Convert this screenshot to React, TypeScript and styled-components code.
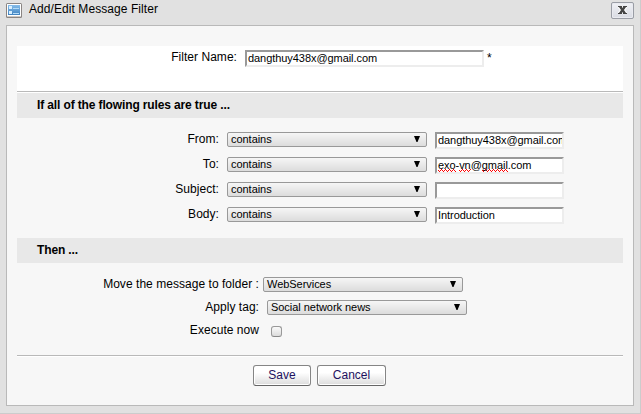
import React from 'react';
import styled, { createGlobalStyle } from 'styled-components';

const GlobalStyle = createGlobalStyle`
  *, *::before, *::after { box-sizing: border-box; }
  body {
    margin: 0;
    background: #e1e1e1;
    font: 12px/15px "Liberation Sans", Arial, sans-serif;
    color: #000;
  }
`;

const Dialog = styled.div`
  width: 641px;
  height: 414px;
  padding: 0 6px;
  background: #e1e1e1;
  border-right: 1px solid #ccc;
  border-bottom: 1px solid #ccc;
  overflow: hidden;
`;

const TitleBar = styled.header`
  display: flex;
  align-items: flex-start;
  height: 25px;
  svg { display: block; flex: none; }
`;

const Title = styled.h1`
  flex: 1;
  margin: 2px 0 0 7px;
  font-size: 12px;
  font-weight: normal;
  line-height: 15px;
  letter-spacing: 0.07px;
`;

const CloseButton = styled.button`
  display: flex;
  align-items: center;
  justify-content: center;
  width: 23px;
  height: 17px;
  margin: 2px 0 0;
  padding: 0 0 1px;
  border: 1px solid #9a9da5;
  border-radius: 2px;
  background: linear-gradient(#f0f1f5, #d9dbe3);
  box-shadow: inset 0 0 0 1px #e9eaf0;
`;

const Panel = styled.main`
  width: 628px;
  height: 381px;
  padding: 20px 10px 0;
  border: 1px solid #b9b9b9;
  background: #f7f7f7;
`;

const NameBlock = styled.div`
  display: flex;
  align-items: flex-start;
  height: 45px;
  padding-top: 4px;
  background: #fff;
`;

const Rule = styled.div`
  height: 2px;
  border-top: 1px solid #b9b9b9;
  background: #fff;
`;

const SectionTitle = styled.h2`
  height: 25px;
  margin: 0;
  padding-left: 20px;
  background: #e8e8e8;
  font-size: 12px;
  font-weight: bold;
  line-height: 24px;
  letter-spacing: -0.13px;
`;

const Label = styled.label<{ $width: number; $gap: number }>`
  width: ${(p) => p.$width}px;
  margin-right: ${(p) => p.$gap}px;
  text-align: right;
  white-space: nowrap;
  letter-spacing: 0.04px;
`;

const Field = styled.div<{ $width: number }>`
  width: ${(p) => p.$width}px;
  height: 17px;
  padding-left: 1px;
  border: 2px solid;
  border-color: #999 #ededed #ededed #999;
  background: #fff;
  font-size: 11px;
  line-height: 13px;
  letter-spacing: -0.06px;
  white-space: nowrap;
  overflow: hidden;
`;

const Misspelled = styled.span`
  padding-bottom: 1px;
  background: url("data:image/svg+xml,%3Csvg xmlns='http://www.w3.org/2000/svg' width='4' height='3' shape-rendering='crispEdges'%3E%3Cpath fill='%23f00' d='M0 1h1v1H0zM1 2h1v1H1zM2 1h1v1H2zM3 0h1v1H3z'/%3E%3C/svg%3E") repeat-x 0 100% / 4px 3px;
`;

const Asterisk = styled.span`
  margin: 1px 0 0 3px;
`;

const SelectBox = styled.div`
  display: flex;
  justify-content: space-between;
  width: 200px;
  height: 15px;
  padding: 0 6px 0 3px;
  border: 1px solid #999;
  border-radius: 2px;
  background: linear-gradient(#f6f6f6, #dcdcdc);
  font-size: 11px;
  line-height: 13px;
  letter-spacing: -0.04px;
  svg { display: block; margin-top: 3px; }
`;

const RuleRow = styled.div`
  display: flex;
  height: 25px;
  ${Field} { margin-left: 8px; }
`;

const Rules = styled.div`
  height: 120px;
  padding-top: 14px;
`;

const Actions = styled.div`
  height: 92px;
  padding-top: 14px;
`;

const ActionRow = styled.div`
  display: flex;
  height: 23px;
`;

const Checkbox = styled.div`
  width: 11px;
  height: 11px;
  margin-top: 3px;
  border: 1px solid #999;
  border-bottom-color: #888;
  border-radius: 3px;
  background: linear-gradient(#fafafa, #dcdcdc);
`;

const Footer = styled.footer`
  display: flex;
  gap: 6px;
  padding: 8px 0 0 236px;
`;

const Button = styled.button<{ $width: number }>`
  width: ${(p) => p.$width}px;
  height: 21px;
  padding: 0;
  border: 1px solid #858585;
  border-bottom-color: #666;
  border-radius: 3px;
  background: linear-gradient(#fff 35%, #dcdcdc);
  box-shadow: inset 0 0 0 1px #fff;
  color: #1d1160;
  font: 12px/19px "Liberation Sans", Arial, sans-serif;
`;

const FormIcon = () => (
  <svg width="16" height="18" viewBox="0 0 16 18">
    <defs>
      <linearGradient id="form-fill" x1="0" y1="0" x2="0" y2="1">
        <stop offset="0" stopColor="#86bdea" />
        <stop offset="1" stopColor="#3f82c0" />
      </linearGradient>
    </defs>
    <rect y="3" width="16" height="15" rx="1.5" fill="#8a8583" />
    <rect x="1" y="4" width="14" height="12" fill="#fff" />
    <rect x="1" y="16" width="14" height="1" fill="#cdc8c4" />
    <rect x="2" y="5" width="12" height="10" fill="url(#form-fill)" />
    <path fill="#d8efff" d="M3 6h3v3H3zM3 11h3v3H3z" />
    <path fill="#b4dbf7" d="M7 8h6v1H7zM7 13h6v1H7z" />
  </svg>
);

const CloseIcon = () => (
  <svg width="11" height="10" viewBox="0 0 11 10">
    <path d="M2.5 1.5l6 7M8.5 1.5l-6 7" stroke="#fff" strokeWidth="4" />
    <path d="M1 1h4v1H1zM6 1h4v1H6zM1 8h4v1H1zM6 8h4v1H6z" fill="#454545" />
    <path d="M3 1.5l5 7M8 1.5l-5 7" stroke="#454545" strokeWidth="2.3" />
  </svg>
);

const Select = ({ value }: { value: string }) => (
  <SelectBox>
    <span>{value}</span>
    <svg width="6" height="6" viewBox="0 0 6 6">
      <path d="M0 0h6L3.5 6h-1z" fill="#000" />
    </svg>
  </SelectBox>
);

const conditions: { label: string; value: React.ReactNode }[] = [
  { label: 'From:', value: 'dangthuy438x@gmail.com' },
  {
    label: 'To:',
    value: (
      <>
        <Misspelled>exo</Misspelled>-<Misspelled>vn</Misspelled>@
        <Misspelled>gmail</Misspelled>.com
      </>
    ),
  },
  { label: 'Subject:', value: '' },
  { label: 'Body:', value: 'Introduction' },
];

export default function App() {
  return (
    <>
      <GlobalStyle />
      <Dialog>
        <TitleBar>
          <FormIcon />
          <Title>Add/Edit Message Filter</Title>
          <CloseButton aria-label="Close">
            <CloseIcon />
          </CloseButton>
        </TitleBar>
        <Panel>
          <NameBlock>
            <Label $width={220} $gap={8}>Filter Name:</Label>
            <Field $width={239}>dangthuy438x@gmail.com</Field>
            <Asterisk>*</Asterisk>
          </NameBlock>
          <Rule />
          <SectionTitle>If all of the flowing rules are true ...</SectionTitle>
          <Rules>
            {conditions.map((c) => (
              <RuleRow key={c.label}>
                <Label $width={202} $gap={8}>{c.label}</Label>
                <Select value="contains" />
                <Field $width={129}>{c.value}</Field>
              </RuleRow>
            ))}
          </Rules>
          <SectionTitle>Then ...</SectionTitle>
          <Actions>
            <ActionRow>
              <Label $width={242} $gap={4}>Move the message to folder :</Label>
              <Select value="WebServices" />
            </ActionRow>
            <ActionRow>
              <Label $width={242} $gap={8}>Apply tag:</Label>
              <Select value="Social network news" />
            </ActionRow>
            <ActionRow>
              <Label $width={242} $gap={12}>Execute now</Label>
              <Checkbox />
            </ActionRow>
          </Actions>
          <Rule />
          <Footer>
            <Button $width={58}>Save</Button>
            <Button $width={69}>Cancel</Button>
          </Footer>
        </Panel>
      </Dialog>
    </>
  );
}
